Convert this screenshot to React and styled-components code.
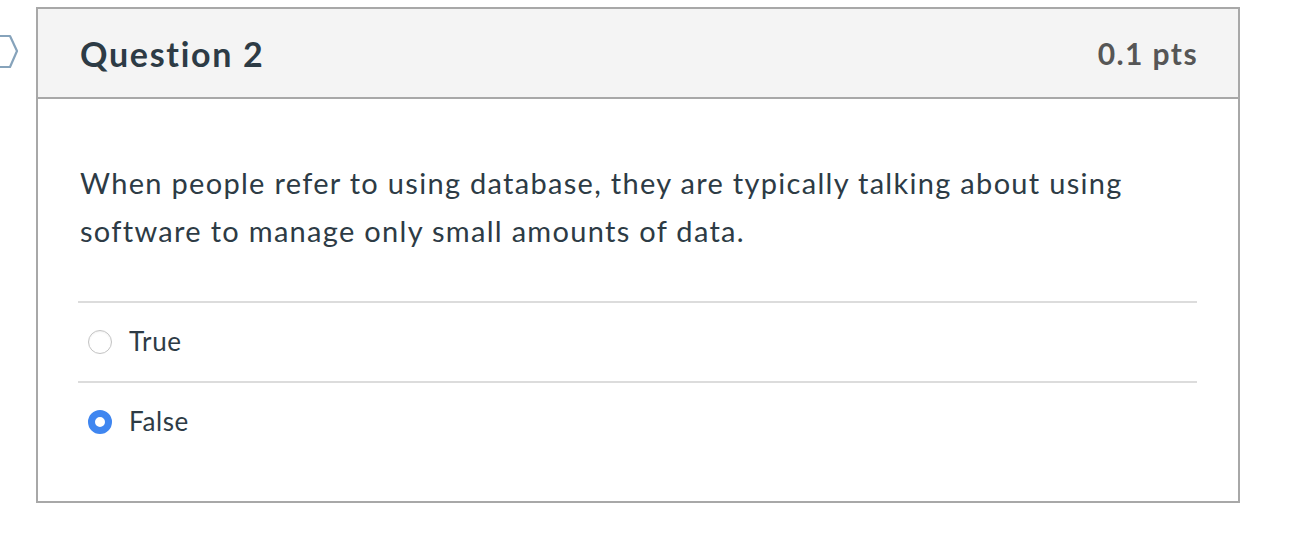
import React from "react";
import styled, { createGlobalStyle } from "styled-components";

const Global = createGlobalStyle`
  html, body { margin: 0; padding: 0; background: #fff; }
  body { font-family: Lato, "Open Sans", sans-serif; color: #2d3b45; }
`;

const Page = styled.div`
  display: flex;
  align-items: flex-start;
  padding: 7px 0 0 0;
  position: relative;
`;

const Marker = styled.svg`
  position: absolute;
  left: 0;
  top: 34px;
`;

const Card = styled.section`
  margin-left: 36px;
  width: 1204px;
  box-sizing: border-box;
  border: 2px solid #a8a8a8;
  background: #fff;
`;

const Header = styled.header`
  display: flex;
  align-items: center;
  justify-content: space-between;
  height: 88px;
  padding: 0 41px 0 42px;
  background: #f4f4f4;
  border-bottom: 2px solid #a8a8a8;
`;

const Title = styled.h2`
  margin: 0;
  font-family: Lato, sans-serif;
  font-weight: 700;
  font-size: 34px;
  letter-spacing: 1.7px;
  color: #2d3b45;
`;

const Points = styled.div`
  font-family: Lato, sans-serif;
  font-weight: 700;
  font-size: 30px;
  letter-spacing: 1.4px;
  margin-right: -1px;
  color: #565656;
`;

const Body = styled.div`
  padding: 60px 41px 40px 40px;
`;

const Prompt = styled.p`
  margin: 0 0 0 2px;
  font-size: 29px;
  letter-spacing: 1.3px;
  line-height: 48px;
  color: #2d3b45;
`;

const Answers = styled.ul`
  list-style: none;
  margin: 46px 0 0 0;
  padding: 0;
`;

const Answer = styled.li`
  display: flex;
  align-items: center;
  height: 78px;
  border-top: 2px solid #dcdcdc;
  padding-left: 10px;
  gap: 17px;
`;

const Radio = styled.span`
  width: 24px;
  height: 24px;
  box-sizing: border-box;
  border-radius: 50%;
  flex: none;
  ${(p) =>
    p.$checked
      ? `background: #fff; border: 7px solid #3f86f0;`
      : `background: #fff; border: 1px solid #c3c3c3; box-shadow: inset 0 1px 2px rgba(0,0,0,0.06);`}
`;

const Label = styled.span`
  font-size: 26px;
  letter-spacing: 0.6px;
  color: #2d3b45;
  margin-top: -3px;
`;

export default function App() {
  const answers = [
    { label: "True", checked: false },
    { label: "False", checked: true },
  ];
  return (
    <>
      <Global />
      <Page>
        <Marker width="20" height="36" viewBox="0 0 20 36">
          <path
            d="M-6 2 H10 L17 17 L10 33 H-6"
            fill="none"
            stroke="#86a3bb"
            strokeWidth="2.2"
            strokeLinejoin="round"
          />
        </Marker>
        <Card>
          <Header>
            <Title>Question 2</Title>
            <Points>0.1 pts</Points>
          </Header>
          <Body>
            <Prompt>
              When people refer to using database, they are typically talking about using
              software to manage only small amounts of data.
            </Prompt>
            <Answers>
              {answers.map((a) => (
                <Answer key={a.label}>
                  <Radio $checked={a.checked} />
                  <Label>{a.label}</Label>
                </Answer>
              ))}
            </Answers>
          </Body>
        </Card>
      </Page>
    </>
  );
}
